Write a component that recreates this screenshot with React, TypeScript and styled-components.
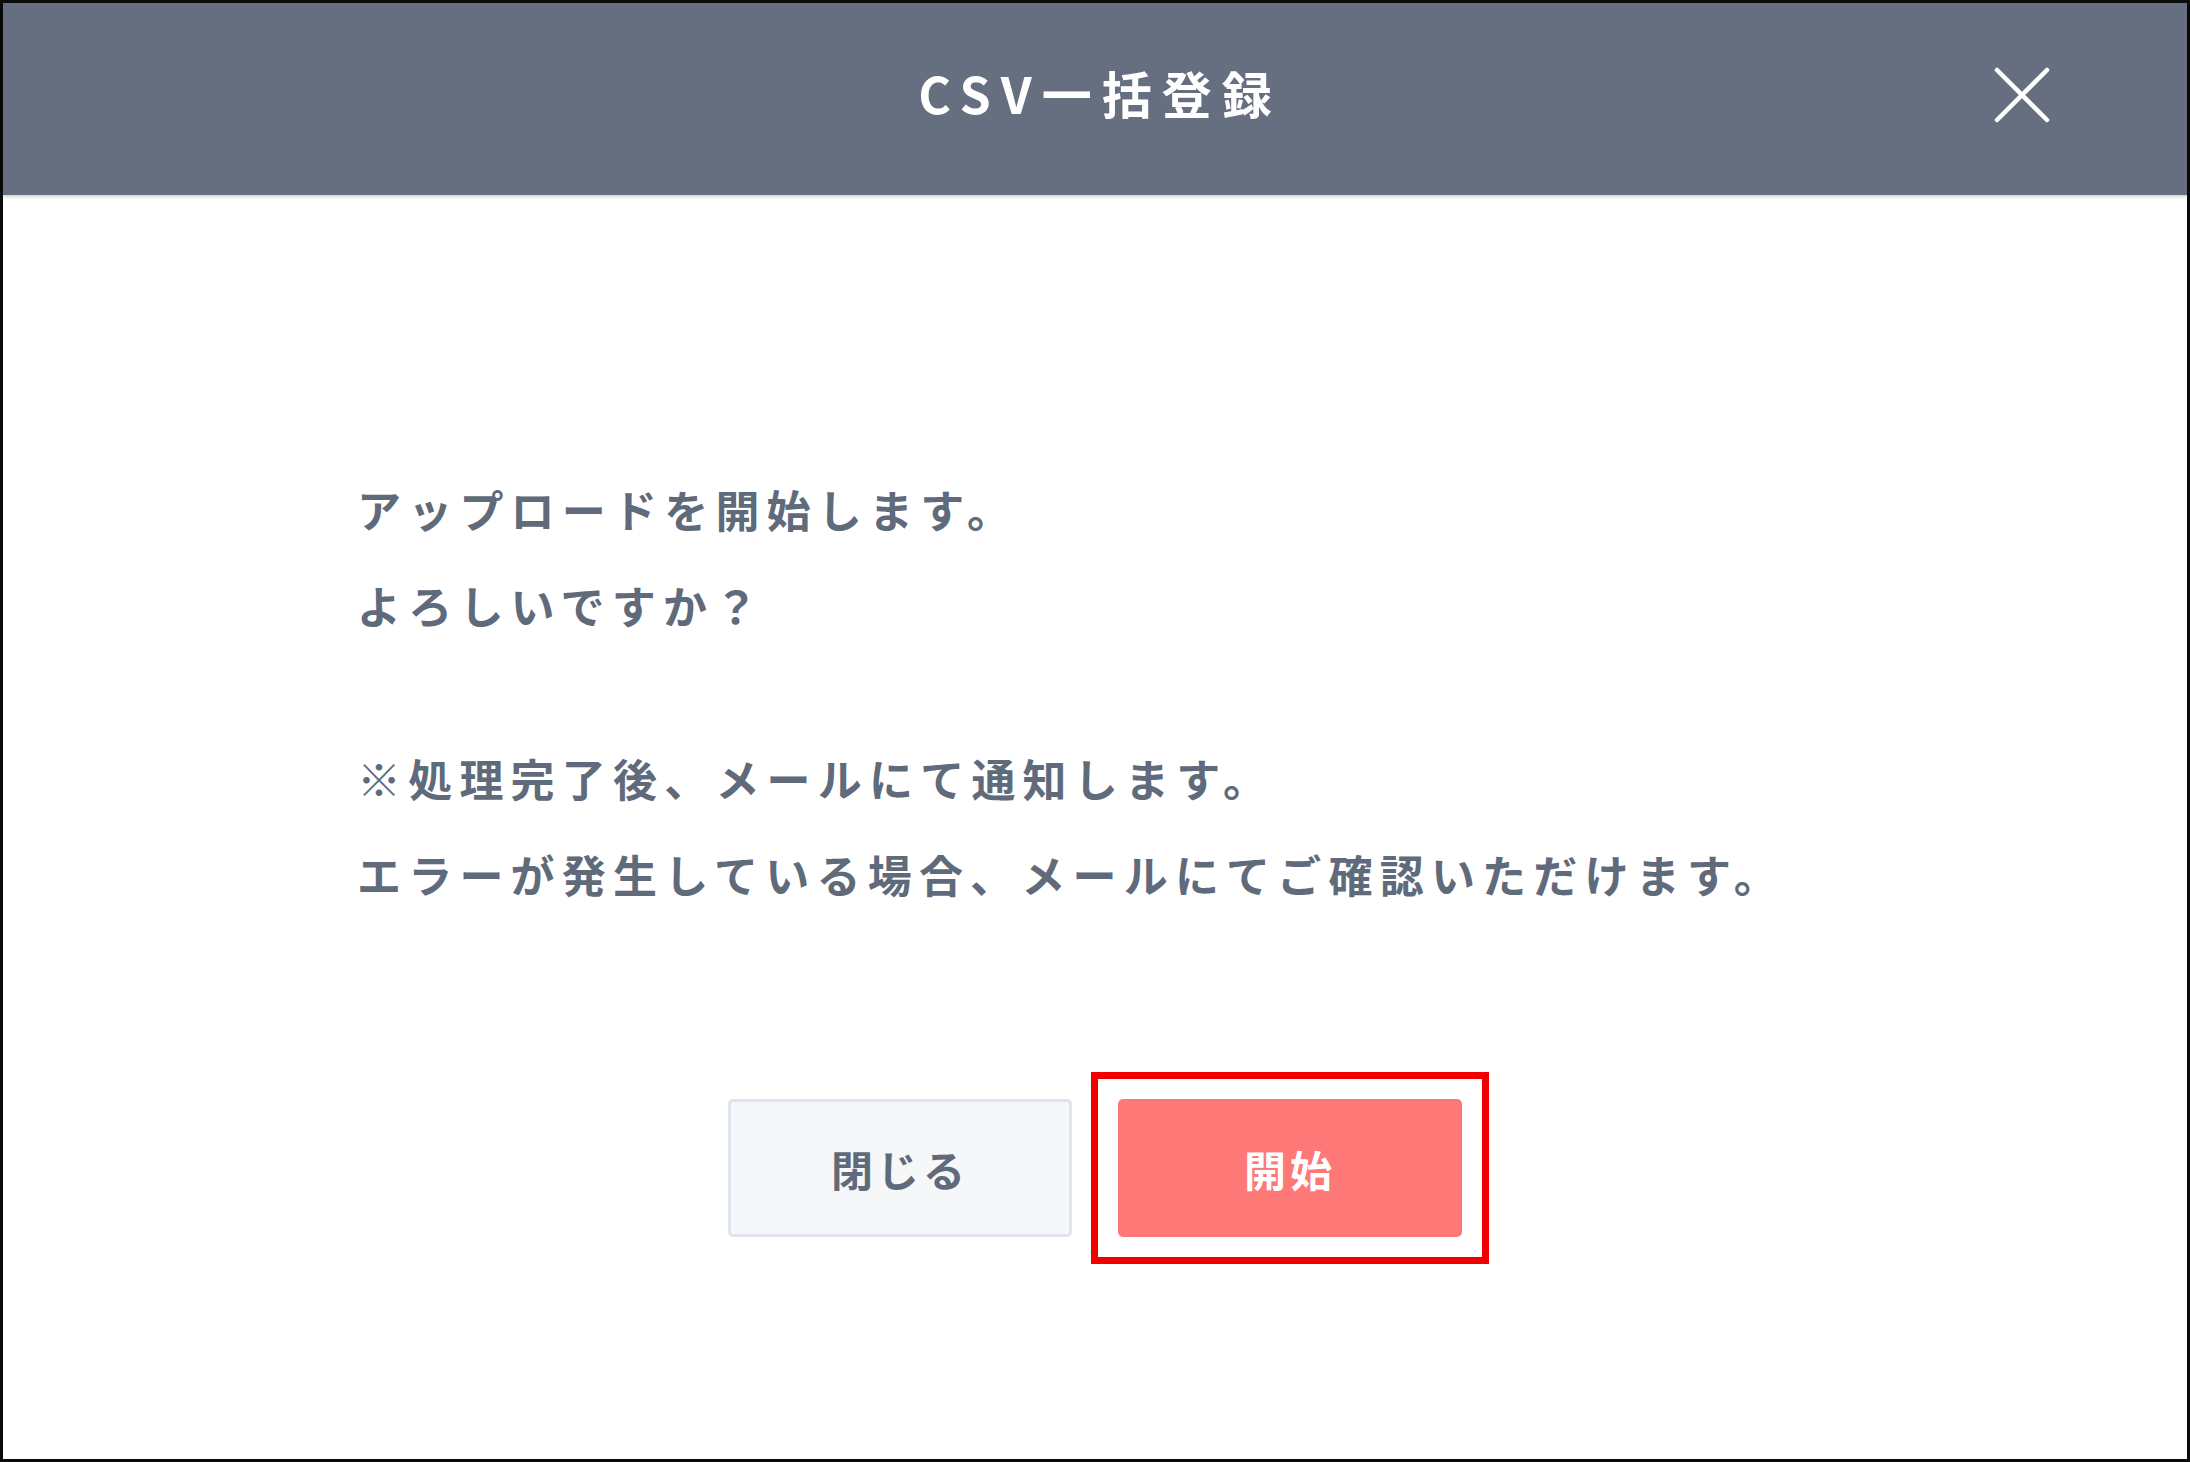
import styled, { createGlobalStyle } from 'styled-components';

const GlobalStyle = createGlobalStyle`
  html,
  body {
    margin: 0;
    padding: 0;
    background: #ffffff;
  }

  * {
    box-sizing: border-box;
  }
`;

const FONT = `'Noto Sans CJK JP', 'Noto Sans', sans-serif`;

function CloseIcon() {
  return (
    <svg width="56" height="56" viewBox="0 0 56 56" fill="none">
      <path
        d="M3 3L53 53M53 3L3 53"
        stroke="#ffffff"
        strokeWidth="4.5"
        strokeLinecap="round"
      />
    </svg>
  );
}

function App() {
  const onClickClose = () => {};
  const onClickStart = () => {};

  return (
    <>
      <GlobalStyle />
      <StyledModal>
        <StyledHeader>
          <StyledTitle>CSV一括登録</StyledTitle>
          <StyledCloseButton type="button" aria-label="close" onClick={onClickClose}>
            <CloseIcon />
          </StyledCloseButton>
        </StyledHeader>
        <StyledBody>
          <StyledMessage>
            <StyledParagraph>
              アップロードを開始します。
              <br />
              よろしいですか？
            </StyledParagraph>
            <StyledParagraph>
              ※処理完了後、メールにて通知します。
              <br />
              エラーが発生している場合、メールにてご確認いただけます。
            </StyledParagraph>
          </StyledMessage>
          <StyledButtonGroup>
            <StyledButton type="button" variant="secondary" onClick={onClickClose}>
              閉じる
            </StyledButton>
            {/* 注目箇所の赤枠 */}
            <StyledHighlight>
              <StyledButton type="button" variant="primary" onClick={onClickStart}>
                開始
              </StyledButton>
            </StyledHighlight>
          </StyledButtonGroup>
        </StyledBody>
      </StyledModal>
    </>
  );
}

const StyledModal = styled.div`
  display: flex;
  flex-direction: column;

  width: 2190px;
  height: 1462px;
  border: 3px solid #0b0b0b;

  background: #ffffff;
  font-family: ${FONT};
`;

const StyledHeader = styled.header`
  display: flex;
  align-items: center;
  justify-content: center;
  position: relative;

  height: 192px;
  flex-shrink: 0;

  background: #656f80;
  box-shadow: 0 2px 3px rgba(0, 0, 0, 0.18);
`;

const StyledTitle = styled.h1`
  margin: 0;
  margin-top: -14px;
  margin-right: -10px;

  color: #ffffff;
  font-size: 50px;
  font-weight: 700;
  letter-spacing: 10px;
`;

const StyledCloseButton = styled.button`
  position: absolute;
  top: 64px;
  right: 137px;

  display: flex;
  padding: 0;
  border: none;

  background: transparent;
  cursor: pointer;
`;

const StyledBody = styled.main`
  display: flex;
  flex-direction: column;

  padding: 266px 0 0 354px;
`;

const StyledMessage = styled.div`
  display: flex;
  flex-direction: column;
  gap: 77px;
`;

const StyledParagraph = styled.p`
  margin: 0;

  color: #5f6a7b;
  font-size: 44px;
  font-weight: 700;
  line-height: 96px;
  letter-spacing: 7.2px;
`;

const StyledButtonGroup = styled.div`
  display: flex;
  justify-content: center;
  gap: 46px;

  margin: 177px 0 0 -354px;
`;

const StyledHighlight = styled.div`
  display: flex;

  margin: -27px;
  padding: 20px;
  border: 7px solid #f20000;
`;

type ButtonProps = {
  variant: 'primary' | 'secondary';
};

const StyledButton = styled.button.withConfig({
  shouldForwardProp: prop => prop !== 'variant',
})<ButtonProps>`
  width: 344px;
  height: 138px;
  border-radius: 5px;
  border: 3px solid
    ${({ variant }) => (variant === 'primary' ? '#ff7878' : '#dfe4ee')};

  background: ${({ variant }) => (variant === 'primary' ? '#ff7878' : '#f6f7f9')};
  color: ${({ variant }) => (variant === 'primary' ? '#ffffff' : '#5f6a7b')};
  font-family: ${FONT};
  font-size: 42px;
  font-weight: 700;
  letter-spacing: 4px;

  cursor: pointer;
`;

export default App;
